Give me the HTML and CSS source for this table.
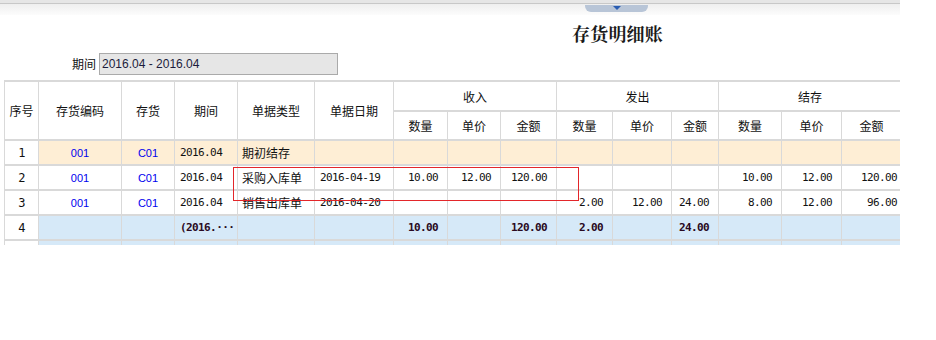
FILE: index.html
```html
<!DOCTYPE html>
<html lang="zh-CN">
<head>
  <meta charset="UTF-8">
  <title>存货明细账</title>
  <link rel="stylesheet" href="styles.css">
</head>
<body>
  <div class="topbar">
    <div class="toggle"><span class="toggle__arrow"></span></div>
  </div>

  <h1 class="title">存货明细账</h1>

  <div class="filter">
    <span class="filter__label">期间</span>
    <div class="filter__value">2016.04 - 2016.04</div>
  </div>

  <div class="ledger">
    <table class="ledger__table">
      <colgroup>
        <col style="width:34px"><col style="width:83px"><col style="width:53px"><col style="width:63px">
        <col style="width:77px"><col style="width:79px"><col style="width:54px"><col style="width:53px">
        <col style="width:56px"><col style="width:56px"><col style="width:59px"><col style="width:47px">
        <col style="width:63px"><col style="width:60px"><col style="width:59px">
      </colgroup>
      <thead>
        <tr class="head-top">
          <th rowspan="2">序号</th>
          <th rowspan="2">存货编码</th>
          <th rowspan="2">存货</th>
          <th rowspan="2">期间</th>
          <th rowspan="2">单据类型</th>
          <th rowspan="2">单据日期</th>
          <th colspan="3">收入</th>
          <th colspan="3">发出</th>
          <th colspan="3" class="last">结存</th>
        </tr>
        <tr class="head-sub">
          <th>数量</th><th>单价</th><th>金额</th>
          <th>数量</th><th>单价</th><th>金额</th>
          <th>数量</th><th>单价</th><th class="last">金额</th>
        </tr>
      </thead>
      <tbody>
        <tr class="row row--opening">
          <td class="no">1</td>
          <td class="code">001</td>
          <td class="code">C01</td>
          <td class="text period">2016.04</td>
          <td class="text kind">期初结存</td>
          <td></td>
          <td></td><td></td><td></td>
          <td></td><td></td><td></td>
          <td></td><td></td><td class="last"></td>
        </tr>
        <tr class="row">
          <td class="no">2</td>
          <td class="code">001</td>
          <td class="code">C01</td>
          <td class="text period">2016.04</td>
          <td class="text kind">采购入库单</td>
          <td class="text date">2016-04-19</td>
          <td class="num">10.00</td><td class="num">12.00</td><td class="num">120.00</td>
          <td></td><td></td><td></td>
          <td class="num">10.00</td><td class="num">12.00</td><td class="num last">120.00</td>
        </tr>
        <tr class="row">
          <td class="no">3</td>
          <td class="code">001</td>
          <td class="code">C01</td>
          <td class="text period">2016.04</td>
          <td class="text kind">销售出库单</td>
          <td class="text date">2016-04-20</td>
          <td></td><td></td><td></td>
          <td class="num">2.00</td><td class="num">12.00</td><td class="num">24.00</td>
          <td class="num">8.00</td><td class="num">12.00</td><td class="num last">96.00</td>
        </tr>
        <tr class="row row--total">
          <td class="no">4</td>
          <td></td>
          <td></td>
          <td class="text period">(2016.···</td>
          <td></td>
          <td></td>
          <td class="num">10.00</td><td></td><td class="num">120.00</td>
          <td class="num">2.00</td><td></td><td class="num">24.00</td>
          <td></td><td></td><td class="last"></td>
        </tr>
        <tr class="row row--total">
          <td class="no"></td>
          <td></td><td></td><td></td><td></td><td></td>
          <td></td><td></td><td></td>
          <td></td><td></td><td></td>
          <td></td><td></td><td class="last"></td>
        </tr>
      </tbody>
    </table>
    <div class="ledger__mark"></div>
  </div>
</body>
</html>
```

FILE: styles.css
```css
* { box-sizing: border-box; }
body {
  margin: 0;
  background: #fff;
  font-family: "Noto Sans CJK SC", "Liberation Sans", sans-serif;
  color: #111;
}

.topbar {
  width: 900px;
  height: 15px;
  display: flex;
  padding-left: 585px;
  background: linear-gradient(#e6e6e6 0, #e6e6e6 3px, #c8c8c8 3px, #c8c8c8 4px, #efefef 4px, #fcfcfc 15px);
}
.toggle {
  width: 63px;
  height: 7px;
  margin-top: 5px;
  background: #b8c5d7;
  border-radius: 0 0 6px 6px;
  display: flex;
  justify-content: center;
}
.toggle__arrow {
  width: 0;
  height: 0;
  margin-top: 1px;
  border-left: 4px solid transparent;
  border-right: 4px solid transparent;
  border-top: 4px solid #2a5db2;
}

.title {
  margin: 8px 0 0 572px;
  font-family: "Noto Serif CJK SC", "Noto Sans CJK SC", serif;
  font-size: 18px;
  line-height: 20px;
  font-weight: 700;
  color: #1a1a1a;
  letter-spacing: 0.2px;
}

.filter {
  display: flex;
  align-items: center;
  gap: 3px;
  margin-top: 10px;
  padding-left: 72px;
}
.filter__label {
  font-size: 12px;
  line-height: 22px;
}
.filter__value {
  width: 239px;
  height: 22px;
  padding-left: 2px;
  background: #e6e6e6;
  border: 1px solid #aaa;
  font-family: "Liberation Sans", sans-serif;
  font-size: 12px;
  line-height: 20px;
  color: #1c1c3c;
}

.ledger {
  position: relative;
  margin: 5px 0 0 4px;
  width: 896px;
  height: 165px;
  overflow: hidden;
}
.ledger__table {
  width: 897px;
  table-layout: fixed;
  border-collapse: separate;
  border-spacing: 0;
  border-top: 2px solid #d9d9d9;
  border-left: 1px solid #d9d9d9;
}
.ledger__table th,
.ledger__table td {
  padding: 0;
  border-right: 1px solid #d9d9d9;
  border-bottom: 2px solid #d9d9d9;
  white-space: nowrap;
  overflow: hidden;
}
.ledger__table .last { border-right: 0; }
.ledger__table th {
  font-size: 12px;
  font-weight: 400;
  text-align: center;
  vertical-align: middle;
}
.head-top { height: 30px; }
.head-sub { height: 29px; }

.row { height: 25px; }
.row td {
  font-size: 12px;
  line-height: 16px;
  vertical-align: middle;
}
.row--opening td { background: #feeed5; }
.row--total td { background: #d6e9f8; }
.row td.no { background: #fff; }

.no {
  text-align: center;
  font-family: "DejaVu Sans Mono", monospace;
  font-size: 11px;
  letter-spacing: -0.6px;
}
.code {
  text-align: center;
  font-family: "Liberation Sans", sans-serif;
  color: #0000ee;
}
.row .code { font-size: 11px; }
.text { text-align: left; }
.period {
  padding-left: 5px !important;
  font-family: "DejaVu Sans Mono", monospace;
  letter-spacing: -0.6px;
}
.row .period { font-size: 11px; }
.kind { padding-left: 4px !important; }
.date {
  padding-left: 5px !important;
  font-family: "DejaVu Sans Mono", monospace;
  letter-spacing: -0.6px;
}
.row .date { font-size: 11px; }
.num {
  text-align: right;
  padding-right: 9px !important;
  font-family: "DejaVu Sans Mono", monospace;
  letter-spacing: -0.6px;
}
.row .num { font-size: 11px; }
.row .num.last { padding-right: 4px !important; }

.row--total .num,
.row--total .period {
  font-weight: 700;
  color: #2a0a22;
}

.ledger__mark {
  position: absolute;
  left: 229px;
  top: 87px;
  width: 346px;
  height: 34px;
  border: 1px solid #e3262a;
}
```
